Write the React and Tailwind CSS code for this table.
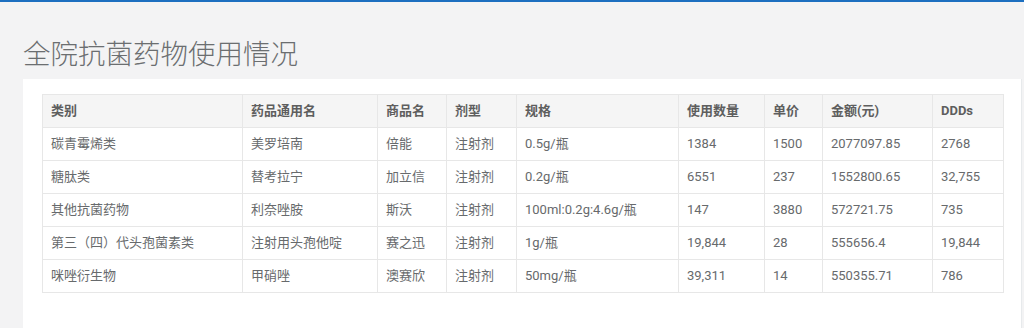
import React from "react";

const cols = [
  { key: "cat", label: "类别", w: 200 },
  { key: "name", label: "药品通用名", w: 135 },
  { key: "brand", label: "商品名", w: 69 },
  { key: "form", label: "剂型", w: 70 },
  { key: "spec", label: "规格", w: 162 },
  { key: "qty", label: "使用数量", w: 86 },
  { key: "price", label: "单价", w: 58 },
  { key: "amt", label: "金额(元)", w: 110 },
  { key: "ddd", label: "DDDs", w: 71 },
];

const rows = [
  ["碳青霉烯类", "美罗培南", "倍能", "注射剂", "0.5g/瓶", "1384", "1500", "2077097.85", "2768"],
  ["糖肽类", "替考拉宁", "加立信", "注射剂", "0.2g/瓶", "6551", "237", "1552800.65", "32,755"],
  ["其他抗菌药物", "利奈唑胺", "斯沃", "注射剂", "100ml:0.2g:4.6g/瓶", "147", "3880", "572721.75", "735"],
  ["第三（四）代头孢菌素类", "注射用头孢他啶", "赛之迅", "注射剂", "1g/瓶", "19,844", "28", "555656.4", "19,844"],
  ["咪唑衍生物", "甲硝唑", "澳赛欣", "注射剂", "50mg/瓶", "39,311", "14", "550355.71", "786"],
];

export default function App() {
  return (
    <div
      className="flex min-h-[328px] flex-col bg-[#f3f3f4] text-[#676a6c]"
      style={{ fontFamily: 'Roboto, "Noto Sans CJK SC", sans-serif' }}
    >
      <div className="h-[2px] bg-[#1c6fc0]" />
      <div className="pl-[23px] pt-[39px] pb-[10px]">
        <h2 className="text-[27.5px] leading-[28px] font-light text-[#6b6e70]">
          全院抗菌药物使用情况
        </h2>
      </div>
      <div className="ml-[23px] mr-[2px] flex-1 border-r border-[#e7eaec] bg-white px-[19px] pt-[15px]">
        <table className="table-fixed border-collapse text-[13px] leading-[16px]" style={{ width: 961 }}>
          <colgroup>
            {cols.map((c) => (
              <col key={c.key} style={{ width: c.w }} />
            ))}
          </colgroup>
          <thead>
            <tr>
              {cols.map((c) => (
                <th
                  key={c.key}
                  className="border border-[#e7e7e7] bg-[#f5f5f5] px-[8px] py-[8px] text-left font-bold text-[#5e5e5e]"
                >
                  {c.label}
                </th>
              ))}
            </tr>
          </thead>
          <tbody>
            {rows.map((r, i) => (
              <tr key={i}>
                {r.map((v, j) => (
                  <td
                    key={j}
                    className="border border-[#e7e7e7] px-[8px] py-[8px] text-left whitespace-nowrap"
                  >
                    {v}
                  </td>
                ))}
              </tr>
            ))}
          </tbody>
        </table>
      </div>
    </div>
  );
}
